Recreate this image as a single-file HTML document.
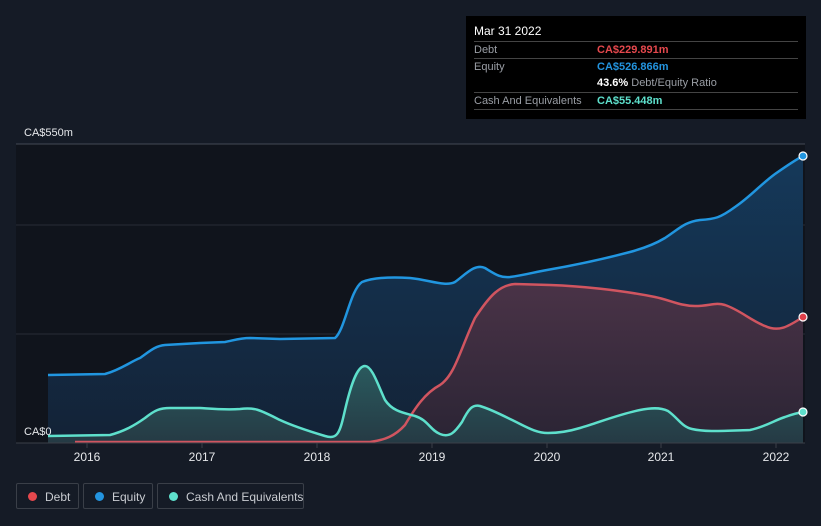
<!DOCTYPE html>
<html><head><style>
body{margin:0;width:821px;height:526px;background:#151b26;font-family:"Liberation Sans",sans-serif;overflow:hidden;position:relative}
.tt{position:absolute;left:466px;top:16px;width:340px;height:103px;background:#000;color:#fff;font-size:11px}
.row{position:absolute;left:8px;width:324px;border-top:1px solid #444;height:16px;line-height:16px}
.row span{position:absolute;left:123px;font-weight:bold;white-space:nowrap}
.lbl{color:#9a9ea5}
.leg{position:absolute;top:483px;height:26px;border:1px solid #3a3f48;border-radius:2px;color:#c9ccd1;font-size:12px;line-height:26px;box-sizing:border-box;white-space:nowrap}
.leg i{position:absolute;left:11px;top:8px;width:9px;height:9px;border-radius:50%}
</style></head><body>
<svg width="821" height="526" style="position:absolute;left:0;top:0">
<defs>
<linearGradient id="ge" x1="0" y1="0" x2="0" y2="1"><stop offset="0" stop-color="#15395a"/><stop offset="1" stop-color="#132236"/></linearGradient>
<linearGradient id="gd" x1="0" y1="0" x2="0" y2="1"><stop offset="0" stop-color="#4a3347"/><stop offset="1" stop-color="#2a2434"/></linearGradient>
<linearGradient id="gc" x1="0" y1="0" x2="0" y2="1"><stop offset="0" stop-color="#2a5a5e"/><stop offset="1" stop-color="#253a44"/></linearGradient>
</defs>
<rect x="16" y="144" width="789" height="299" fill="#10141c"/>
<line x1="16" y1="144" x2="805" y2="144" stroke="#444a55"/>
<line x1="16" y1="225" x2="805" y2="225" stroke="#272c36"/>
<line x1="16" y1="334" x2="805" y2="334" stroke="#272c36"/>
<path fill="url(#ge)" d="M48,375 L105,374 C120,370 130,362 140,358 C150,351 155,346 165,345 L200,343 L225,342 C235,340 240,338 250,338 L280,339 L335,338 C345,330 350,290 362,282 C375,277 395,277 410,278 C430,280 445,287 455,282 C465,275 475,263 485,268 C495,274 500,278 510,277 C525,275 535,272 547,270 C570,266 600,260 630,252 C645,248 655,244 665,238 C680,228 685,222 700,220 C715,219 720,218 735,207 C750,197 760,185 775,174 C785,167 795,160 803,156 L803,443 L48,443 Z"/>
<path fill="url(#gd)" d="M75,442 L370,442 C385,440 395,436 405,425 C415,408 425,393 440,385 C455,375 460,350 475,318 C490,295 500,285 515,284 L550,285 C580,286 620,290 655,297 C670,300 680,306 695,306 C710,306 715,302 725,305 C740,310 750,320 765,326 C780,333 790,325 803,317 L803,443 L75,443 Z"/>
<path fill="url(#gc)" d="M48,436 L110,435 C125,431 135,425 145,418 C155,410 160,408 170,408 L200,408 C215,409 225,410 240,409 C255,407 260,410 280,420 C295,427 315,433 325,436 C338,440 340,432 345,410 C352,380 358,366 365,366 C372,366 378,385 385,400 C393,412 405,413 415,416 C428,420 430,430 440,434 C450,438 455,432 462,422 C468,410 472,404 480,406 C490,409 500,414 510,419 C525,426 535,433 548,433 C560,433 570,431 580,428 C600,422 620,414 640,410 C650,408 660,407 668,411 C678,418 682,427 692,429 C705,432 720,431 750,430 C765,427 775,420 785,417 C793,414 797,413 803,412 L803,443 L48,443 Z"/>
<path fill="none" stroke="#2196e0" stroke-width="2.5" d="M48,375 L105,374 C120,370 130,362 140,358 C150,351 155,346 165,345 L200,343 L225,342 C235,340 240,338 250,338 L280,339 L335,338 C345,330 350,290 362,282 C375,277 395,277 410,278 C430,280 445,287 455,282 C465,275 475,263 485,268 C495,274 500,278 510,277 C525,275 535,272 547,270 C570,266 600,260 630,252 C645,248 655,244 665,238 C680,228 685,222 700,220 C715,219 720,218 735,207 C750,197 760,185 775,174 C785,167 795,160 803,156"/>
<path fill="none" stroke="#d05560" stroke-width="2.5" d="M75,442 L370,442 C385,440 395,436 405,425 C415,408 425,393 440,385 C455,375 460,350 475,318 C490,295 500,285 515,284 L550,285 C580,286 620,290 655,297 C670,300 680,306 695,306 C710,306 715,302 725,305 C740,310 750,320 765,326 C780,333 790,325 803,317"/>
<path fill="none" stroke="#5ee0cc" stroke-width="2.5" d="M48,436 L110,435 C125,431 135,425 145,418 C155,410 160,408 170,408 L200,408 C215,409 225,410 240,409 C255,407 260,410 280,420 C295,427 315,433 325,436 C338,440 340,432 345,410 C352,380 358,366 365,366 C372,366 378,385 385,400 C393,412 405,413 415,416 C428,420 430,430 440,434 C450,438 455,432 462,422 C468,410 472,404 480,406 C490,409 500,414 510,419 C525,426 535,433 548,433 C560,433 570,431 580,428 C600,422 620,414 640,410 C650,408 660,407 668,411 C678,418 682,427 692,429 C705,432 720,431 750,430 C765,427 775,420 785,417 C793,414 797,413 803,412"/>
<circle cx="803" cy="156" r="4" fill="#2196e0" stroke="#fff" stroke-width="1.2"/>
<circle cx="803" cy="317" r="4" fill="#e0404a" stroke="#fff" stroke-width="1.2"/>
<circle cx="803" cy="412" r="4" fill="#5ee0cc" stroke="#fff" stroke-width="1.2"/>
<line x1="16" y1="443" x2="805" y2="443" stroke="#3a3f48"/>
<g stroke="#3a3f48"><line x1="87" y1="443" x2="87" y2="448"/><line x1="202" y1="443" x2="202" y2="448"/><line x1="317" y1="443" x2="317" y2="448"/><line x1="432" y1="443" x2="432" y2="448"/><line x1="547" y1="443" x2="547" y2="448"/><line x1="661" y1="443" x2="661" y2="448"/><line x1="776" y1="443" x2="776" y2="448"/></g>
<g fill="#e6e8eb" font-size="12" text-anchor="middle" font-family="Liberation Sans,sans-serif"><text x="87" y="461">2016</text><text x="202" y="461">2017</text><text x="317" y="461">2018</text><text x="432" y="461">2019</text><text x="547" y="461">2020</text><text x="661" y="461">2021</text><text x="776" y="461">2022</text></g>
<text x="24" y="136" fill="#e6e8eb" font-size="11" font-family="Liberation Sans,sans-serif">CA$550m</text>
<text x="24" y="435" fill="#e6e8eb" font-size="11" font-family="Liberation Sans,sans-serif">CA$0</text>
</svg>
<div class="tt">
<div style="position:absolute;left:8px;top:8px;font-size:12px">Mar 31 2022</div>
<div class="row" style="top:25px"><b class="lbl" style="font-weight:normal">Debt</b><span style="color:#e5484d">CA$229.891m</span></div>
<div class="row" style="top:42px"><b class="lbl" style="font-weight:normal">Equity</b><span style="color:#2394df">CA$526.866m</span></div>
<div class="row" style="top:59px;border:none"><span style="color:#fff">43.6% <b style="color:#9a9ea5;font-weight:normal">Debt/Equity Ratio</b></span></div>
<div class="row" style="top:76px"><b class="lbl" style="font-weight:normal">Cash And Equivalents</b><span style="color:#5ee0cc">CA$55.448m</span></div>
<div class="row" style="top:93px;height:0"></div>
</div>
<div class="leg" style="left:16px;width:63px"><i style="background:#e5484d"></i><span style="margin-left:28px">Debt</span></div>
<div class="leg" style="left:83px;width:70px"><i style="background:#2394df"></i><span style="margin-left:28px">Equity</span></div>
<div class="leg" style="left:157px;width:147px"><i style="background:#5ee0cc"></i><span style="margin-left:28px">Cash And Equivalents</span></div>
</body></html>
